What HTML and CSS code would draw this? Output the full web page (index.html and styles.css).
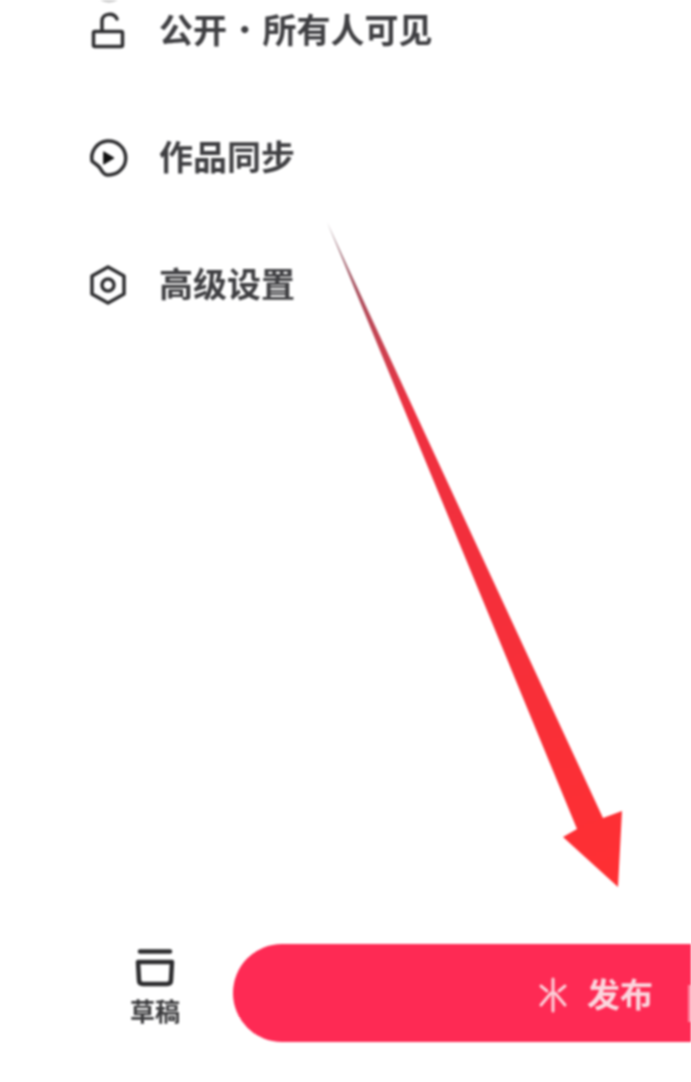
FILE: index.html
```html
<!DOCTYPE html>
<html lang="zh-CN">
<head>
<meta charset="utf-8">
<title>发布</title>
<link rel="stylesheet" href="styles.css">
</head>
<body>
<main class="page">
  <ul class="options">
    <li class="option">
      <svg class="option-icon" viewBox="0 0 40 40">
        <path class="ghost" d="M14 -12 C18 -9.500 24 -9.500 28 -12"/>
        <rect x="5.500" y="20.500" width="29" height="15" rx="1.500"/>
        <path d="M14 20 V10 C14 2 26 1 29 8"/>
      </svg>
      <span class="option-label option-label-spaced">公开 <span class="option-dot">·</span> 所有人可见</span>
    </li>
    <li class="option">
      <svg class="option-icon" viewBox="0 0 40 40">
        <path d="M4 23 A17 17 0 1 1 20 37 C15 37 14 33 12 30 C10 27 7 26 4 23 Z"/>
        <path class="solid" d="M16 14 L26 20 L16 26 Z"/>
      </svg>
      <span class="option-label">作品同步</span>
    </li>
    <li class="option">
      <svg class="option-icon" viewBox="0 0 40 40">
        <path d="M20 2 L36 11 V29 L20 38 L4 29 V11 Z"/>
        <circle cx="20" cy="20" r="6"/>
      </svg>
      <span class="option-label">高级设置</span>
    </li>
  </ul>

  <footer class="actions">
    <div class="draft">
      <svg class="draft-icon" viewBox="0 0 44 40">
        <path d="M7 4.500 H37"/>
        <path d="M5 15 H39 L38 33 Q38 37 34 37 H10 Q6 37 6 33 Z"/>
      </svg>
      <span class="draft-label">草稿</span>
    </div>
    <button class="publish" type="button">
      <svg class="publish-icon" viewBox="0 0 30 36">
        <path d="M15 2 V34"/>
        <path d="M3 9 L9 14"/>
        <path d="M27 9 L21 14"/>
        <path d="M13 16 L3 28"/>
        <path d="M17 16 L27 28"/>
      </svg>
      <span class="publish-label">发布</span>
      <span class="publish-edge"></span>
    </button>
  </footer>
</main>

<svg class="arrow" viewBox="0 0 691 1082" aria-hidden="true">
  <defs>
    <linearGradient id="arrow-fill" x1="327" y1="222" x2="618" y2="887" gradientUnits="userSpaceOnUse">
      <stop offset="0" stop-color="#a89aa0"/>
      <stop offset="0.1" stop-color="#a8505e"/>
      <stop offset="0.28" stop-color="#ee3040"/>
      <stop offset="1" stop-color="#ff2f33"/>
    </linearGradient>
  </defs>
  <polygon fill="url(#arrow-fill)" points="327,222 603,818 622,811 618,887 563,837 577,829"/>
</svg>
</body>
</html>
```

FILE: styles.css
```css
* {
  box-sizing: border-box;
}

html,
body {
  margin: 0;
  height: 100%;
  overflow: hidden;
  background: #fff;
}

body {
  position: relative;
  font-family: "Noto Sans CJK SC", "Noto Sans", sans-serif;
  filter: blur(0.8px);
}

.page {
  display: flex;
  flex-direction: column;
  height: 1082px;
}

.options {
  display: flex;
  flex-direction: column;
  gap: 87px;
  margin: 0;
  padding: 11px 0 0 88px;
  list-style: none;
}

.option {
  display: flex;
  align-items: center;
  gap: 31px;
  height: 40px;
}

.option-icon {
  flex: none;
  width: 40px;
  height: 40px;
  overflow: visible;
  fill: none;
  stroke: #2e2e30;
  stroke-width: 3.500;
  stroke-linejoin: round;
  stroke-linecap: round;
}

.option-icon .solid {
  fill: #111;
  stroke: #111;
  stroke-width: 1;
}

.option-icon .ghost {
  stroke: #ccc;
}

.option-label {
  margin-bottom: 5px;
  font-size: 34px;
  font-weight: 700;
  line-height: 40px;
  color: #3f3f42;
  white-space: nowrap;
}

.option-label-spaced {
  word-spacing: -7px;
}

.option-dot {
  font-weight: 400;
}

.actions {
  display: flex;
  align-items: stretch;
  gap: 38px;
  height: 98px;
  margin-top: auto;
  margin-bottom: 40px;
  padding-left: 115px;
}

.draft {
  flex: none;
  display: flex;
  flex-direction: column;
  align-items: center;
  width: 80px;
  padding-top: 3px;
}

.draft-icon {
  width: 44px;
  height: 40px;
  fill: none;
  stroke: #2c2c2e;
  stroke-width: 4.500;
  stroke-linejoin: round;
  stroke-linecap: round;
}

.draft-label {
  margin-top: 9px;
  font-size: 25px;
  font-weight: 700;
  line-height: 28px;
  color: #3a3a3c;
}

.publish {
  flex: 1;
  display: flex;
  align-items: center;
  justify-content: flex-end;
  padding: 0;
  border: 0;
  border-radius: 49px 0 0 49px;
  background: #fe2a54;
  color: #fbd6de;
  font: inherit;
}

.publish-icon {
  width: 30px;
  height: 36px;
  margin-top: 3px;
  margin-right: 19px;
  fill: none;
  stroke: #fbd0d9;
  stroke-width: 3;
  stroke-linecap: round;
}

.publish-label {
  font-size: 33px;
  font-weight: 700;
  line-height: 40px;
}

.publish-edge {
  width: 3px;
  height: 37px;
  margin-top: 21px;
  margin-left: 35px;
  background: #ff86a0;
}

.arrow {
  position: absolute;
  top: 0;
  left: 0;
  width: 691px;
  height: 1082px;
  pointer-events: none;
}
```
